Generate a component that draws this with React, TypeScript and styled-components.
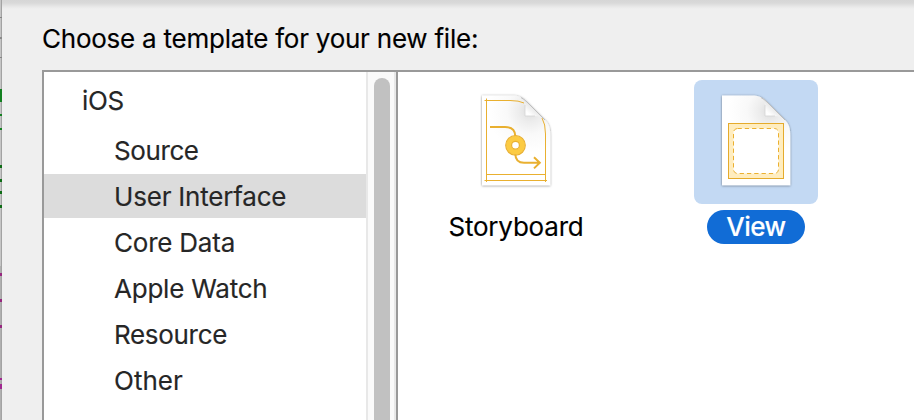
import React from 'react';
import styled, { createGlobalStyle } from 'styled-components';

const GlobalStyle = createGlobalStyle`
  * { box-sizing: border-box; }
  body { margin: 0; overflow: hidden; background: #efefef; }
`;

const Window = styled.div`
  display: flex;
  width: 914px;
  height: 420px;
  overflow: hidden;
  font-family: Inter, "Noto Sans", sans-serif;
  font-size: 26px;
  line-height: 44px;
  white-space: nowrap;
  color: #000;
`;

const EditorEdge = styled.svg`
  flex: none;
  width: 2px;
  height: 420px;
`;

const Sheet = styled.main`
  display: flex;
  flex-direction: column;
  flex: 1;
  min-width: 0;
  padding-left: 40px;
  background: linear-gradient(#d6d6d6 0, #d9d9d9 3px, #e9e9e9 7px, #efefef 9px);
`;

const Heading = styled.h1`
  height: 70px;
  margin: 0;
  padding-top: 17px;
  font-size: 26px;
  font-weight: 400;
  letter-spacing: -0.235px;
  -webkit-text-stroke: 0.15px currentColor;
`;

const Panes = styled.div`
  display: flex;
  flex: 1;
  border: solid #999;
  border-width: 2px 0 0 2px;
  background: #fff;
`;

const Sidebar = styled.nav`
  display: flex;
  flex-direction: column;
  gap: 2px;
  width: 322px;
  padding-top: 6px;
  line-height: 46px;
  color: #262626;
  -webkit-text-stroke: 0.15px currentColor;
`;

const Group = styled.div`
  height: 48px;
  padding-left: 38px;
  letter-spacing: -0.3px;
`;

const Row = styled.div<{ $selected?: boolean; $track: number }>`
  height: 44px;
  padding-left: 70px;
  letter-spacing: ${(p) => p.$track}px;
  background: ${(p) => (p.$selected ? '#dcdcdc' : 'transparent')};
`;

const ScrollTrack = styled.div`
  display: flex;
  width: 30px;
  padding: 6px 0 0 6px;
  border: solid #e8e8e8;
  border-width: 0 2px;
  background: #fafafa;
`;

const ScrollThumb = styled.div`
  width: 16px;
  border-radius: 8px 8px 0 0;
  background: #c1c1c1;
`;

const Templates = styled.section`
  display: flex;
  flex: 1;
  align-items: flex-start;
  gap: 86px;
  padding: 8px 0 0 41px;
  border-left: 2px solid #999;
`;

const Template = styled.div`
  display: flex;
  flex-direction: column;
  align-items: center;
  gap: 6px;
  width: 154px;
`;

const Tile = styled.div<{ $selected?: boolean }>`
  width: 124px;
  height: 124px;
  border-radius: 8px;
  background: ${(p) => (p.$selected ? '#c3d9f3' : 'transparent')};
`;

const Label = styled.div<{ $selected?: boolean; $track: number }>`
  display: flex;
  justify-content: center;
  width: ${(p) => (p.$selected ? '98px' : '154px')};
  height: 34px;
  line-height: 34px;
  border-radius: 17px;
  color: ${(p) => (p.$selected ? '#fff' : '#000')};
  font-weight: ${(p) => (p.$selected ? 500 : 400)};
  background: ${(p) => (p.$selected ? '#116cd6' : 'transparent')};
  letter-spacing: ${(p) => p.$track}px;
  -webkit-text-stroke: 0.15px currentColor;
`;

const Art = styled.svg`
  display: block;
  width: 124px;
  height: 124px;
`;

const PAGE =
  'M28 15.5H58C66 15.5 69 18 73 22L91 40C95 44 96.3 48 96.3 56V105.3H28Z';

function DocumentArt({ id, children }: { id: string; children: React.ReactNode }) {
  return (
    <Art viewBox="0 0 124 124">
      <defs>
        <radialGradient id={`${id}-page`} gradientUnits="userSpaceOnUse" cx="76" cy="31" r="42">
          <stop offset="0" stopColor="#dcdcdc" />
          <stop offset="0.25" stopColor="#ececec" />
          <stop offset="0.55" stopColor="#f9f9f9" />
          <stop offset="1" stopColor="#fff" />
        </radialGradient>
        <linearGradient id={`${id}-fold`} x1="0.55" y1="0.45" x2="0" y2="1">
          <stop offset="0" stopColor="#e6e6e6" />
          <stop offset="0.4" stopColor="#fff" />
          <stop offset="1" stopColor="#f8f8f8" />
        </linearGradient>
        <filter id={`${id}-shadow`} x="-10%" y="-10%" width="120%" height="120%">
          <feDropShadow dx="0" dy="0.5" stdDeviation="1" floodColor="#000" floodOpacity="0.5" />
        </filter>
      </defs>
      <path d={PAGE} fill={`url(#${id}-page)`} filter={`url(#${id}-shadow)`} />
      {children}
      <path d="M65 17Q71 20 71 26V36H80Q88 36 92 41L73 22Q70 18.5 65 17Z" fill={`url(#${id}-fold)`} />
      <path d="M71 25V36H81" fill="none" stroke="#d4d4d4" strokeWidth="0.8" />
      <path d="M67 17.5Q70 19 73 22L91 40" fill="none" stroke="#bdbdbd" strokeWidth="1" />
    </Art>
  );
}

function StoryboardArt() {
  return (
    <DocumentArt id="storyboard">
      <g fill="none" stroke="#e9b030">
        <path d="M30.5 20.5H56Q65 20.5 70 23M88 38Q91.5 44 91.5 54V102M32.5 18.5V102M30.5 100.5H93M32.5 94.5H91.5" />
        <path d="M36 47H51Q61 47 61.3 56M61.3 74Q61.5 82.8 70 82.8H85.5M80 77.2L85.8 82.8L80 88.4" strokeWidth="2" />
        <circle cx="61.5" cy="65.3" r="6.7" stroke="#fccb42" strokeWidth="5.6" />
        <circle cx="61.5" cy="65.3" r="9.8" strokeWidth="1.2" />
        <circle cx="61.5" cy="65.3" r="3.9" fill="#fff" strokeWidth="1.2" />
      </g>
    </DocumentArt>
  );
}

function ViewArt() {
  return (
    <DocumentArt id="view">
      <rect x="34.5" y="43.5" width="55" height="55" fill="#ffedbf" stroke="#e5ab2c" />
      <rect x="39.5" y="48.5" width="45" height="45" rx="4" fill="#fff" stroke="#ebb030" strokeDasharray="4.3 3" />
    </DocumentArt>
  );
}

const edgeMarks: [number, number, string][] = [
  [17, 1, '#858585'], [37, 2, '#8a8a8a'], [57, 1, '#858585'],
  [89, 13, '#138020'], [114, 2, '#138020'], [128, 2, '#138020'],
  [165, 3, '#0f6d16'], [179, 3, '#0f6d16'], [191, 3, '#0f6d16'], [205, 3, '#0f6d16'],
  [273, 3, '#97277f'], [299, 3, '#97277f'], [325, 3, '#97277f'],
  [378, 2, '#a02890'], [384, 5, '#a02890'],
];

const rows = [
  { name: 'Source', track: -0.4 },
  { name: 'User Interface', track: -0.2 },
  { name: 'Core Data', track: -0.22 },
  { name: 'Apple Watch', track: -0.22 },
  { name: 'Resource', track: -0.32 },
  { name: 'Other', track: 0 },
];

export default function App() {
  return (
    <>
      <GlobalStyle />
      <Window>
        <EditorEdge viewBox="0 0 2 420" shapeRendering="crispEdges">
          <rect width="1" height="420" fill="#c6c6c6" />
          <rect y="266" width="1" height="154" fill="#b0b0b0" />
          <rect x="1" width="1" height="420" fill="#a3a3a3" />
          {edgeMarks.map(([y, h, fill]) => (
            <rect key={y} y={y} width="2" height={h} fill={fill} />
          ))}
        </EditorEdge>
        <Sheet>
          <Heading>Choose a template for your new file:</Heading>
          <Panes>
            <Sidebar>
              <Group>iOS</Group>
              {rows.map((row) => (
                <Row key={row.name} $selected={row.name === 'User Interface'} $track={row.track}>
                  {row.name}
                </Row>
              ))}
            </Sidebar>
            <ScrollTrack>
              <ScrollThumb />
            </ScrollTrack>
            <Templates>
              <Template>
                <Tile><StoryboardArt /></Tile>
                <Label $track={-0.2}>Storyboard</Label>
              </Template>
              <Template>
                <Tile $selected><ViewArt /></Tile>
                <Label $selected $track={-0.5}>View</Label>
              </Template>
            </Templates>
          </Panes>
        </Sheet>
      </Window>
    </>
  );
}
